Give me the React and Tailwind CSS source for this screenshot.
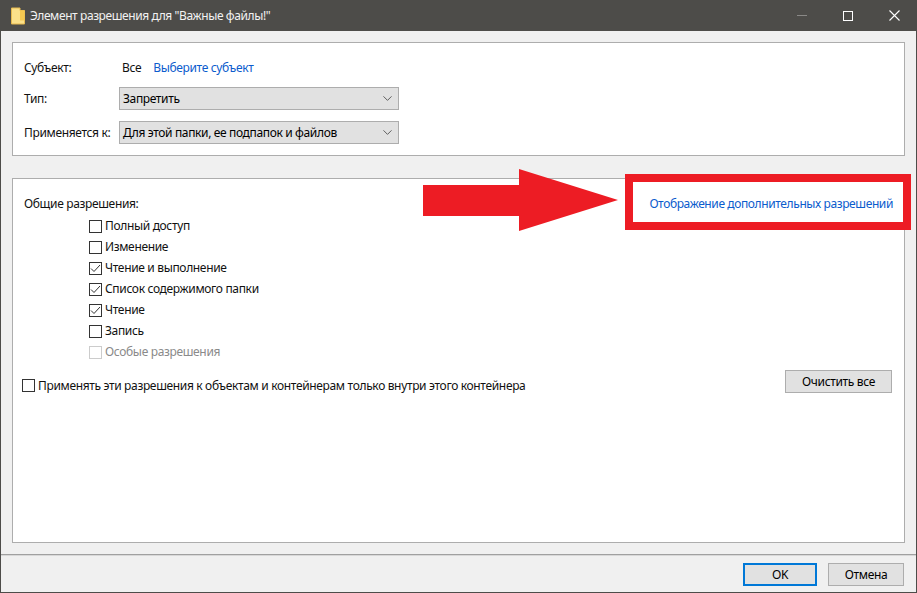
import React from 'react';
import { ChevronDown } from 'lucide-react';

const permissions = [
  { label: 'Полный доступ' },
  { label: 'Изменение' },
  { label: 'Чтение и выполнение', checked: true },
  { label: 'Список содержимого папки', checked: true },
  { label: 'Чтение', checked: true },
  { label: 'Запись' },
  { label: 'Особые разрешения', disabled: true },
];

const Checkbox = ({ checked, disabled }) => (
  <span className={`flex h-[13px] w-[13px] shrink-0 items-center justify-center border bg-white ${disabled ? 'border-[#cccccc]' : 'border-[#333333]'}`}>
    {checked && (
      <svg width="11" height="11" viewBox="0 0 11 11" fill="none" stroke="#333333" strokeWidth="1">
        <path d="M1 5.5L4 8.5L10 2" />
      </svg>
    )}
  </span>
);

const Select = ({ value }) => (
  <div className="flex h-[23px] w-[280px] items-center justify-between border border-[#adadad] bg-[#e1e1e1] pl-[3px] pr-[3px] text-black">
    <span className="pt-px tracking-[-0.36px]">{value}</span>
    <ChevronDown size={15} strokeWidth={1.2} className="text-[#333333]" />
  </div>
);

const Button = ({ children, className = '' }) => (
  <button className={`flex h-[23px] items-center justify-center bg-[#e1e1e1] text-black ${className}`}>
    {children}
  </button>
);

const App = () => {
  return (
    <div className="relative flex h-[593px] w-[917px] flex-col overflow-hidden border-x border-b border-[#4d4c49] bg-[#f0f0f0] font-['Noto_Sans',sans-serif] text-[12px] tracking-[-0.34px] text-[#111111]">
      {/* title bar */}
      <div className="-mx-px flex h-[31px] shrink-0 items-center bg-[#4d4c49] pl-[11px] text-[#f2f2f2]">
        <svg width="14" height="18" viewBox="0 0 14 18" className="shrink-0">
          <path d="M0.5 1h8.5v2.5h4.5v13.5h-13z" fill="#fbe08a" stroke="#e6b94f" strokeWidth="1" />
          <path d="M9 3.5h4.5v10h-4.5z" fill="#f5c951" />
        </svg>
        <span className="ml-[5px] grow tracking-[-0.4px]">Элемент разрешения для "Важные файлы!"</span>
        <div className="flex items-center">
          <span className="flex w-[46px] justify-center"><span className="h-px w-[10px] bg-[#8a8987]" /></span>
          <span className="flex w-[46px] justify-center"><span className="h-[10px] w-[10px] border border-white" /></span>
          <span className="flex w-[46px] justify-center">
            <svg width="11" height="11" viewBox="0 0 11 11" stroke="#ffffff" strokeWidth="1.1"><path d="M0.5 0.5L10.5 10.5M10.5 0.5L0.5 10.5" /></svg>
          </span>
        </div>
      </div>

      <div className="flex grow flex-col px-[11px] pt-[11px]">
        {/* subject panel */}
        <section className="flex h-[114px] w-[893px] shrink-0 flex-col border border-[#adadad] bg-white pl-[11px] pt-[15px]">
          <div className="flex h-[20px] items-center">
            <span className="w-[98px]">Субъект:</span>
            <span>Все</span>
            <span className="ml-[12px] text-[#0b5ccd]">Выберите субъект</span>
          </div>
          <div className="mt-[9px] flex items-center">
            <span className="w-[95px]">Тип:</span>
            <Select value="Запретить" />
          </div>
          <div className="mt-[11px] flex items-center">
            <span className="w-[95px]">Применяется к:</span>
            <Select value="Для этой папки, ее подпапок и файлов" />
          </div>
        </section>

        {/* permissions panel */}
        <section className="mt-[22px] flex h-[365px] w-[893px] flex-col border border-[#adadad] bg-white pt-[16px]">
          <div className="flex h-[18px] items-center justify-between pl-[11px] pr-[11px]">
            <span>Общие разрешения:</span>
            <span className="tracking-[-0.39px] text-[#0b5ccd]">Отображение дополнительных разрешений</span>
          </div>
          <ul className="ml-[76px] mt-[3px] flex flex-col">
            {permissions.map((item) => (
              <li key={item.label} className={`flex h-[21px] items-center gap-[3px] ${item.disabled ? 'text-[#8a8a8a]' : ''}`}>
                <Checkbox checked={item.checked} disabled={item.disabled} />
                <span className="pb-[2px]">{item.label}</span>
              </li>
            ))}
          </ul>
          <div className="mt-[7px] flex items-start justify-between pl-[9px] pr-[12px]">
            <div className="mt-[9px] flex h-[13px] items-center gap-[3px]">
              <Checkbox />
              <span>Применять эти разрешения к объектам и контейнерам только внутри этого контейнера</span>
            </div>
            <Button className="w-[107px] border border-[#adadad]">Очистить все</Button>
          </div>
        </section>
      </div>

      {/* footer */}
      <div className="flex h-[38px] shrink-0 items-start justify-end gap-[11px] border-t border-[#a0a0a0] pr-[12px] pt-[8px] shadow-[inset_0_1px_0_#d8d8d8]">
        <Button className="w-[74px] border-2 border-[#0078d7]">OK</Button>
        <Button className="w-[76px] border border-[#adadad]">Отмена</Button>
      </div>

      {/* red annotation drawn over the dialog */}
      <svg width="195" height="62" viewBox="0 0 195 62" className="absolute left-[422px] top-[169px]">
        <path d="M0 16H96V0L195 31L96 62V47H0Z" fill="#ed1c24" />
      </svg>
      <div className="absolute left-[624px] top-[174px] h-[56px] w-[286px] border-[8px] border-[#ed1c24]" />
    </div>
  );
};

export default App;
